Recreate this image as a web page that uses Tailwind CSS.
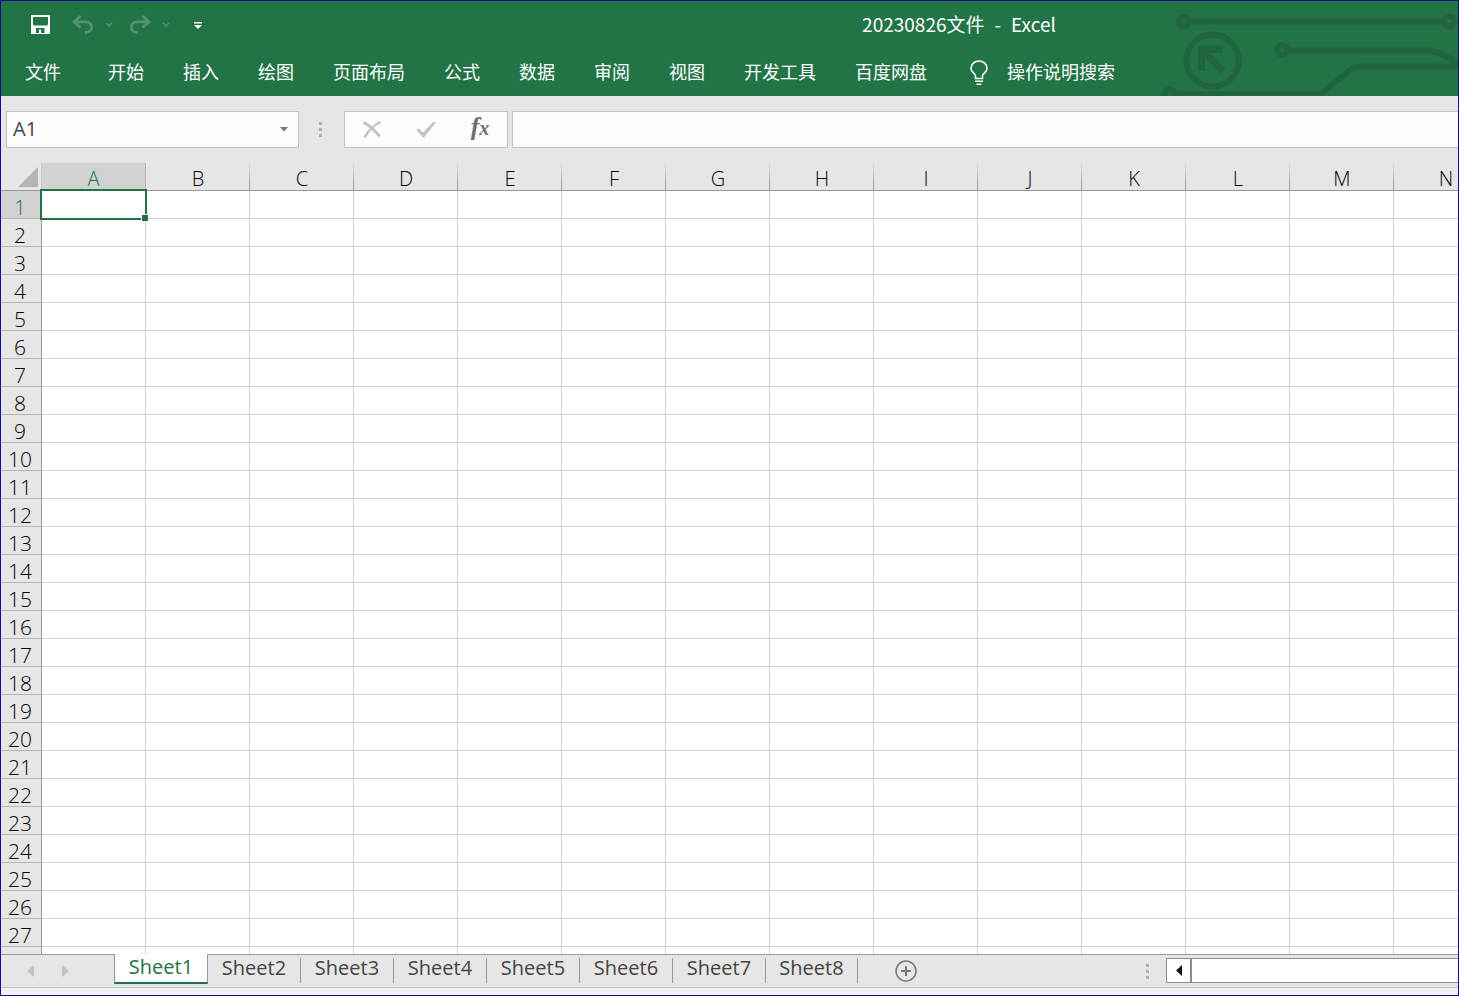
<!DOCTYPE html>
<html lang="zh-CN">
<head>
<meta charset="utf-8">
<title>20230826文件 - Excel</title>
<script src="https://cdn.jsdelivr.net/npm/@tailwindcss/browser@4"></script>
</head>
<body class="flex h-screen flex-col overflow-hidden border border-[#0e0e94] bg-[#e6e6e6] font-['Open_Sans','Noto_Sans_CJK_SC',sans-serif] text-[#444]">

<header class="relative h-[95px] shrink-0 bg-[#227447] font-['Noto_Sans_CJK_SC',sans-serif] text-white">
  <!-- Circuit decoration -->
  <svg class="absolute right-0 bottom-0" width="308" height="95" viewBox="1150 1 308 95" fill="none" stroke="#216540" stroke-width="6" aria-hidden="true">
    <circle cx="1183.500" cy="21.500" r="5"/><path d="M1189 21.500H1443"/><circle cx="1449.500" cy="21.500" r="5"/>
    <circle cx="1212.500" cy="60.500" r="26"/>
    <path d="M1223 49.500H1201.500V71M1203 51L1223 71" stroke-width="7"/>
    <circle cx="1282" cy="50" r="5"/><path d="M1288 50.500H1429Q1437 51 1458 63"/>
    <path d="M1175 94H1321L1350 70Q1355 66.500 1362 66.500H1458"/><circle cx="1169.500" cy="94" r="5"/>
  </svg>
  <div class="flex h-[46px] items-center">
    <div class="flex w-[459px] items-center pt-[2px] pl-[30px]">
      <button aria-label="保存" class="h-5 w-5"><svg width="20" height="20" viewBox="0 0 20 20"><path fill="#fff" fill-rule="evenodd" d="M0 0H19V19H0ZM2 2V9.500L3 10.500H16L17 9.500V2ZM5 13V18H8V14.500H10V18H13.500V13Z"/></svg></button>
      <button aria-label="撤消" class="ml-[21px] h-5 w-[22px]"><svg width="22" height="20" viewBox="0 0 22 20" fill="none" stroke="#529471" stroke-width="2.800"><path d="M8.500 1L2 6.800L8.500 12.500M2.500 6.800H13.500C21.500 6.800 22 17.500 13 17.500"/></svg></button>
      <button aria-label="撤消选项" class="ml-[11px] h-5 w-2"><svg width="8" height="20" viewBox="0 0 8 20" fill="none" stroke="#529471" stroke-width="1.500"><path d="M1 8L4 11L7 8"/></svg></button>
      <button aria-label="恢复" class="ml-4 h-5 w-[22px]"><svg width="22" height="20" viewBox="0 0 22 20" fill="none" stroke="#529471" stroke-width="2.800"><path d="M13.500 1L20 6.800L13.500 12.500M19.500 6.800H8.500C.5 6.800 0 17.500 9 17.500"/></svg></button>
      <button aria-label="恢复选项" class="ml-[11px] h-5 w-2"><svg width="8" height="20" viewBox="0 0 8 20" fill="none" stroke="#529471" stroke-width="1.500"><path d="M1 8L4 11L7 8"/></svg></button>
      <button aria-label="自定义快速访问工具栏" class="ml-6 h-5 w-2"><svg width="8" height="20" viewBox="0 0 8 20" fill="#fff"><path d="M0 7H8V8.500H0ZM0 10H8L4 14Z"/></svg></button>
    </div>
    <h1 class="flex flex-1 justify-center gap-[10px] text-[19px]"><span>20230826文件</span><span>-</span><span>Excel</span></h1>
  </div>
  <nav class="flex h-12 items-center gap-[39px] pl-6 text-[18px] whitespace-nowrap">
    <button class="mr-2">文件</button><button>开始</button><button>插入</button><button>绘图</button><button>页面布局</button><button>公式</button><button>数据</button><button>审阅</button><button>视图</button><button>开发工具</button><button>百度网盘</button>
    <button class="ml-1 flex items-center gap-[19px]"><svg class="mt-1" width="18" height="26" viewBox="0 0 18 26" fill="none" stroke="#fff" stroke-width="1.600"><path d="M5.500 18.500V16C5.500 13.500 1 12.500 1 8.500A8 7.500 0 0 1 17 8.500C17 12.500 12.500 13.500 12.500 16V18.500ZM5 21.300H13M6.500 24.200H11.500"/></svg>操作说明搜索</button>
  </nav>
</header>

<section class="flex h-[67px] shrink-0 items-center pb-[1px] pl-[5px]" aria-label="编辑栏">
  <div class="flex h-[37px] w-[293px] items-center border border-[#c3c3c3] bg-[#fdfdfd]">
    <input aria-label="名称框" value="A1" class="min-w-0 flex-1 bg-transparent pl-[6px] text-[20px] outline-none">
    <button aria-label="名称列表" class="flex h-full w-7 items-center justify-center"><svg width="8" height="5" viewBox="0 0 8 5" fill="#777"><path d="M0 0H8L4 4.500Z"/></svg></button>
  </div>
  <svg class="mr-[22px] ml-5" width="3" height="15" viewBox="0 0 3 15" fill="#b0b0b0" aria-hidden="true"><path d="M0 0H3V3H0ZM0 6H3V9H0ZM0 12H3V15H0Z"/></svg>
  <div class="flex h-[37px] w-[164px] items-center justify-around border border-[#c3c3c3] bg-[#fdfdfd]">
    <button aria-label="取消" class="flex w-12 justify-center"><svg width="18" height="17" viewBox="0 0 18 17" fill="none" stroke="#c2c2c2" stroke-linecap="round"><path stroke-width="2.800" d="M1.500 2C6 4 12 10 16 14.500"/><path stroke-width="2.400" d="M16.500 1.500C11 4 6 9 2 15.500"/></svg></button>
    <button aria-label="输入" class="flex w-12 justify-center"><svg width="20" height="17" viewBox="0 0 20 17" fill="#c4c4c4"><path d="M.5 9L3 7.500L7 11.500L17.500 .5L19.500 2L8 16.500H7Z"/></svg></button>
    <button aria-label="插入函数" class="w-12 pb-1 font-['Liberation_Serif',serif] text-[26px] leading-7 font-bold text-[#6d6d6d] italic">f<span class="text-[20px]">x</span></button>
  </div>
  <input aria-label="编辑栏内容" class="ml-1 h-[37px] min-w-0 flex-1 border border-r-0 border-[#c3c3c3] bg-[#fdfdfd] px-2 text-[20px] outline-none">
</section>

<main class="min-h-0 flex-1 overflow-hidden bg-white">
  <table class="w-full table-fixed border-separate border-spacing-0 text-[20px] leading-[22px] text-black">
    <colgroup id="cols"><col class="w-[41px]"></colgroup>
    <thead><tr id="head" class="bg-[#e6e6e6]">
      <th class="h-7 border-r border-b border-[#999] border-r-[#c9c9c9] p-0" aria-label="全选"><svg class="ml-[17px]" width="20" height="20" viewBox="0 0 20 20" fill="#b5b5b5" aria-hidden="true"><path d="M20 0V20H0Z"/></svg></th>
    </tr></thead>
    <tbody id="rows"></tbody>
  </table>
</main>

<footer class="shrink-0">
  <div class="flex h-[34px] border-t border-b border-t-[#999] border-b-[#c3c3c3]">
    <div class="flex w-[113px] items-center gap-7 pl-[26px]">
      <button aria-label="上一个工作表"><svg width="7" height="12" viewBox="0 0 7 12" fill="#c2c2c2"><path d="M7 0V12L0 6Z"/></svg></button>
      <button aria-label="下一个工作表"><svg width="7" height="12" viewBox="0 0 7 12" fill="#c2c2c2"><path d="M0 0V12L7 6Z"/></svg></button>
    </div>
    <div id="tabs" role="tablist" class="flex text-[20px] leading-5">
      <button role="tab" aria-selected="true" class="-mt-px h-[30px] w-[94px] border-x border-b-2 border-x-[#999] border-b-[#217346] bg-white pb-[3px] text-[#217346]">Sheet1</button>
    </div>
    <button aria-label="新工作表" class="ml-[37px]"><svg width="22" height="22" viewBox="0 0 22 22" fill="none" stroke="#777"><circle cx="11" cy="11" r="10" stroke-width="1.500"/><path d="M6 11H16M11 6V16" stroke-width="2"/></svg></button>
    <svg class="mr-[17px] ml-auto self-center" width="3" height="15" viewBox="0 0 3 15" fill="#b0b0b0" aria-hidden="true"><path d="M0 0H3V3H0ZM0 6H3V9H0ZM0 12H3V15H0Z"/></svg>
    <div class="mt-[3px] flex h-[25px] w-[292px] border border-r-0 border-[#8c8c8c] bg-white">
      <button aria-label="向左滚动" class="flex w-[25px] items-center justify-center border-r-2 border-[#8c8c8c]"><svg width="6" height="11" viewBox="0 0 6 11" fill="#111"><path d="M6 0V11L0 5.500Z"/></svg></button>
    </div>
  </div>
  <div class="h-[7px] bg-[#f1f1f1]"></div>
</footer>

<script>
const cols = document.getElementById('cols'), head = document.getElementById('head');
const rows = document.getElementById('rows'), tabs = document.getElementById('tabs');
const letters = 'ABCDEFGHIJKLMN'.split('');
document.querySelector('table').style.width = 41 + letters.length * 104 + 'px';
letters.forEach((l, i) => {
  cols.insertAdjacentHTML('beforeend', '<col class="w-[104px]">');
  head.insertAdjacentHTML('beforeend', i === 0
    ? `<th scope="col" class="border-r border-b border-[#999] border-r-[#b5b5b5] bg-[#d2d2d2] p-0 pt-[5px] font-light text-[#217346]">${l}</th>`
    : `<th scope="col" class="border-b border-[#999] bg-linear-to-b from-[#e0e0e0] to-[#999] bg-[length:1px_100%] bg-right bg-no-repeat p-0 pt-[5px] font-light">${l}</th>`);
});
const lastRow = 27;
for (let r = 1; r <= lastRow + 1; r++) {
  const th = r === 1
    ? `<th scope="row" class="h-7 border-r border-b border-[#b5b5b5] border-r-[#999] bg-[#d2d2d2] p-0 pt-[5px] pr-[2px] text-[21px] font-light text-[#217346]">${r}</th>`
    : `<th scope="row" class="h-7 border-r border-b border-[#b5b5b5] border-r-[#999] bg-[#e6e6e6] p-0 pt-[5px] pr-[2px] text-[21px] font-light">${r <= lastRow ? r : ''}</th>`;
  const tds = letters.map((_, i) => r === 1 && i === 0
    ? '<td class="relative border-r border-b border-[#d4d4d4] p-0"><div class="absolute -top-[2px] -left-[2px] h-[31px] w-[107px] border-2 border-[#217346]"><span class="absolute -right-[3px] -bottom-[3px] h-[7px] w-[7px] border-t border-l border-white bg-[#217346]"></span></div></td>'
    : '<td class="border-r border-b border-[#d4d4d4] p-0"></td>').join('');
  rows.insertAdjacentHTML('beforeend', `<tr>${th}${tds}</tr>`);
}
for (let s = 2; s <= 8; s++) {
  tabs.insertAdjacentHTML('beforeend', s < 8
    ? `<button role="tab" aria-selected="false" class="mt-[3px] h-[25px] w-[93px] border-r border-[#999] pb-[7px]">Sheet${s}</button>`
    : `<button role="tab" aria-selected="false" class="mt-[3px] h-[25px] w-[92px] border-r border-[#999] pb-[7px]">Sheet${s}</button>`);
}
</script>
</body>
</html>
